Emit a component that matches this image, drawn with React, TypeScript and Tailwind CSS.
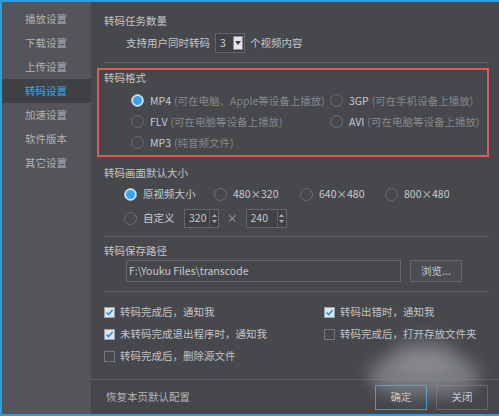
import React from 'react';

const font = { fontFamily: "'Noto Sans CJK SC', 'Noto Sans', sans-serif" };

const navItems = ['播放设置', '下载设置', '上传设置', '转码设置', '加速设置', '软件版本', '其它设置'];

function Radio({ checked, label, hint }: { checked?: boolean; label: string; hint?: string }) {
  return (
    <div className="flex items-center">
      <span
        className={`flex h-[13px] w-[13px] shrink-0 items-center justify-center rounded-full border ${
          checked ? 'border-[#a9b4bf] bg-[#e6ecf1]' : 'border-[#6c6e73]'
        }`}
      >
        {checked && <span className="h-[9px] w-[9px] rounded-full bg-[#35a4f0]" />}
      </span>
      <span className="ml-[6px] text-[#c9cacc]">{label}</span>
      {hint && <span className="ml-[3px] text-[#85878b]">{hint}</span>}
    </div>
  );
}

function Check({ checked, label }: { checked?: boolean; label: string }) {
  return (
    <div className="flex items-center">
      <span
        className={`flex h-[11px] w-[11px] shrink-0 items-center justify-center border ${
          checked ? 'border-[#9aa3ab] bg-[#dfe5ea]' : 'border-[#75777c]'
        }`}
      >
        {checked && (
          <svg width="9" height="9" viewBox="0 0 9 9">
            <path d="M1.5 4.5 L3.6 6.6 L7.6 2" fill="none" stroke="#2f8fd6" strokeWidth="1.6" />
          </svg>
        )}
      </span>
      <span className="ml-[5px] text-[#c3c4c7]">{label}</span>
    </div>
  );
}

function SpinBox({ value, width }: { value: string; width: string }) {
  return (
    <div className={`flex h-[19px] ${width} items-center border border-[#64666b] bg-[#3f4145]`}>
      <span className="flex-1 pl-[4px] text-[#c9cacc]">{value}</span>
      <div className="flex h-full w-[9px] flex-col items-center justify-center gap-[3px] border-l border-[#5b5d62]">
        <svg width="5" height="3" viewBox="0 0 5 3">
          <path d="M0 3 L2.5 0 L5 3 Z" fill="#a8aaad" />
        </svg>
        <svg width="5" height="3" viewBox="0 0 5 3">
          <path d="M0 0 L2.5 3 L5 0 Z" fill="#a8aaad" />
        </svg>
      </div>
    </div>
  );
}

export default function App() {
  return (
    <div
      className="relative flex h-[416px] w-[499px] overflow-hidden border-y-2 border-l-2 border-[#2f9be0] bg-[#46484c] text-[10.5px] leading-4"
      style={font}
    >
      {/* left menu */}
      <div className="w-[89px] shrink-0 bg-[#53555a] pt-[5px]">
        {navItems.map((item) => (
          <div
            key={item}
            className={`flex h-[24px] items-center pl-[23px] ${
              item === '转码设置' ? 'bg-[#3f4145] text-[#3ea6ea]' : 'text-[#b1b3b6]'
            }`}
          >
            {item}
          </div>
        ))}
      </div>

      {/* settings panel */}
      <div className="flex flex-1 flex-col">
        <div className="flex-1 pl-[13px] pr-[10px] pt-[11px]">
          <div className="text-[#c5c6c8]">转码任务数量</div>
          <div className="mt-[4px] flex h-[20px] items-center pl-[22px] text-[#c5c6c8]">
            <span>支持用户同时转码</span>
            <div className="ml-[5px] flex h-[20px] w-[30px] items-center border border-[#64666b] bg-[#3f4145]">
              <span className="flex-1 pl-[4px] text-[#d0d1d3]">3</span>
              <span className="mr-[1px] flex h-[14px] w-[10px] items-center justify-center border border-[#8c8e92] bg-[#e4e6e8]">
                <svg width="6" height="4" viewBox="0 0 6 4">
                  <path d="M0 0 L3 4 L6 0 Z" fill="#3a3c40" />
                </svg>
              </span>
            </div>
            <span className="ml-[5px]">个视频内容</span>
          </div>
          <div className="mt-[9px] h-px bg-[#5c5e63]" />

          {/* output format */}
          <div className="-ml-[7px] mt-[5px] h-[89px] border-2 border-[#e0585b] pl-[5px]">
            <div className="text-[#c5c6c8]">转码格式</div>
            <div className="mt-[4px] grid grid-cols-[199px_1fr] pl-[27px]">
              <div className="flex h-[21px] items-center">
                <Radio checked label="MP4" hint="(可在电脑、Apple等设备上播放)" />
              </div>
              <div className="flex h-[21px] items-center">
                <Radio label="3GP" hint="(可在手机设备上播放)" />
              </div>
              <div className="flex h-[21px] items-center">
                <Radio label="FLV" hint=" (可在电脑等设备上播放)" />
              </div>
              <div className="flex h-[21px] items-center">
                <Radio label="AVI" hint=" (可在电脑等设备上播放)" />
              </div>
              <div className="flex h-[21px] items-center">
                <Radio label="MP3" hint="(纯音频文件)" />
              </div>
            </div>
          </div>

          {/* frame size */}
          <div className="mt-[8px] text-[#c5c6c8]">转码画面默认大小</div>
          <div className="mt-[1px] flex h-[24px] items-center pl-[20px]">
            <div className="w-[90px]">
              <Radio checked label="原视频大小" />
            </div>
            <div className="w-[86px]">
              <Radio label="480×320" />
            </div>
            <div className="w-[85px]">
              <Radio label="640×480" />
            </div>
            <Radio label="800×480" />
          </div>
          <div className="flex h-[24px] items-center pl-[20px]">
            <div className="w-[60px]">
              <Radio label="自定义" />
            </div>
            <SpinBox value="320" width="w-[35px]" />
            <span className="mx-[8px] text-[#a9abae]">×</span>
            <SpinBox value="240" width="w-[41px]" />
          </div>
          <div className="mt-[6px] h-px bg-[#5c5e63]" />

          {/* save path */}
          <div className="mt-[6px] text-[#c5c6c8]">转码保存路径</div>
          <div className="mt-[1px] flex items-center pl-[22px]">
            <div className="flex h-[22px] w-[275px] items-center border border-[#64666b] bg-[#45474b] pl-[2px] text-[#c9cacc]">
              F:\Youku Files\transcode
            </div>
            <div className="ml-[9px] flex h-[22px] w-[52px] items-center justify-center border border-[#64666b] bg-[#4b4d52] text-[#c9cacc]">
              浏览...
            </div>
          </div>
          <div className="mt-[9px] h-px bg-[#5c5e63]" />

          {/* notifications */}
          <div className="mt-[9px] grid grid-cols-[220px_1fr]">
            <div className="flex h-[22px] items-center">
              <Check checked label="转码完成后，通知我" />
            </div>
            <div className="flex h-[22px] items-center">
              <Check checked label="转码出错时，通知我" />
            </div>
            <div className="flex h-[22px] items-center">
              <Check checked label="未转码完成退出程序时，通知我" />
            </div>
            <div className="flex h-[22px] items-center">
              <Check label="转码完成后，打开存放文件夹" />
            </div>
            <div className="flex h-[22px] items-center">
              <Check label="转码完成后，删除源文件" />
            </div>
          </div>
        </div>

        {/* footer */}
        <div className="flex h-[35px] items-center border-t border-[#5c5e63] bg-[#44464a] pl-[15px] pr-[11px]">
          <span className="text-[#b4b6b9]">恢复本页默认配置</span>
          <div className="ml-auto flex gap-[9px]">
            <div className="flex h-[25px] w-[52px] items-center justify-center border border-[#3f9ad6] text-[#d0d1d3]">
              确定
            </div>
            <div className="flex h-[25px] w-[52px] items-center justify-center border border-[#64666b] text-[#d0d1d3]">
              关闭
            </div>
          </div>
        </div>
      </div>

      {/* soft overlay mark over the buttons */}
      <div className="pointer-events-none absolute left-[368px] top-[352px] h-[42px] w-[108px] rounded-[40%] bg-[#9a9ca0] opacity-60 blur-[8px]" />
      <div className="pointer-events-none absolute left-[392px] top-[340px] h-[30px] w-[60px] rounded-full bg-[#a3a5a8] opacity-50 blur-[10px]" />
    </div>
  );
}
